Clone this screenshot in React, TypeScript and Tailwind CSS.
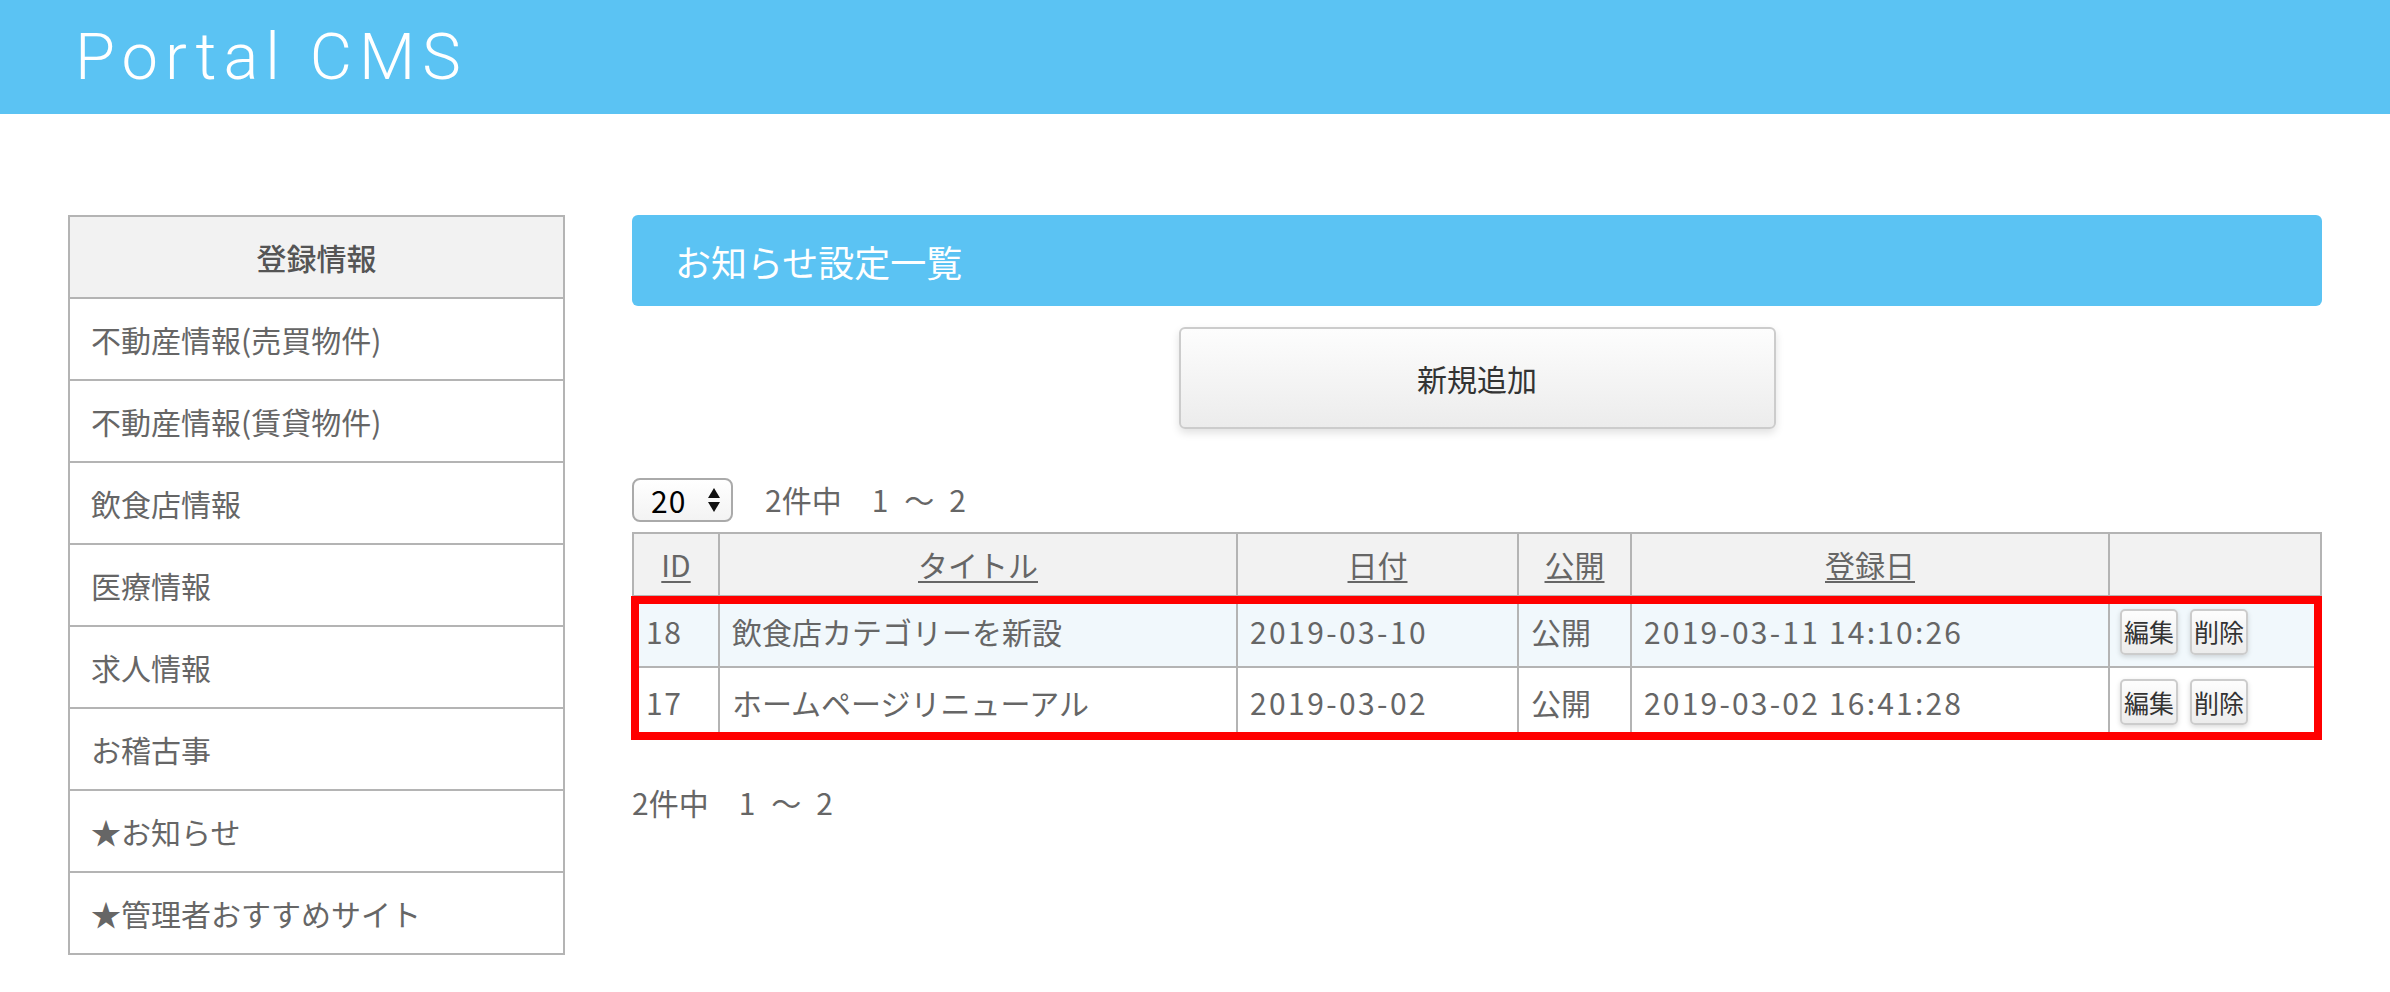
import React from "react";

const sideItems = [
  "不動産情報(売買物件)",
  "不動産情報(賃貸物件)",
  "飲食店情報",
  "医療情報",
  "求人情報",
  "お稽古事",
  "★お知らせ",
  "★管理者おすすめサイト",
];

const rows = [
  { id: "18", title: "飲食店カテゴリーを新設", date: "2019-03-10", pub: "公開", reg: "2019-03-11 14:10:26", bg: "bg-[#f1f8fc]" },
  { id: "17", title: "ホームページリニューアル", date: "2019-03-02", pub: "公開", reg: "2019-03-02 16:41:28", bg: "bg-white" },
];

function SmallBtn({ label }: { label: string }) {
  return (
    <button className="h-[46px] w-[58px] rounded-[5px] border-2 border-[#cccccc] bg-gradient-to-b from-[#fdfdfd] to-[#ececec] text-[25px] leading-none text-[#333333] shadow-[0_2px_5px_rgba(0,0,0,0.15)]">
      {label}
    </button>
  );
}

function Count() {
  return (
    <span className="text-[30px] text-[#666666]">
      2件中　<span className="tracking-[1px]">1</span>
      {"\u2002"}～{"\u2002"}2
    </span>
  );
}

export default function App() {
  const font = { fontFamily: '"Noto Sans CJK JP", "Noto Sans", sans-serif' };
  return (
    <div className="min-h-[992px] w-[2390px] bg-white" style={font}>
      <header className="flex h-[114px] items-center bg-[#5bc3f3] pl-[75px]">
        <h1
          className="text-[65px] font-light leading-none tracking-[7px] text-white"
          style={{ fontFamily: 'Roboto, "Liberation Sans", sans-serif' }}
        >
          Portal CMS
        </h1>
      </header>

      <div className="flex items-start gap-[67px] px-[68px] pt-[101px]">
        <nav className="w-[497px] shrink-0 border-2 border-[#b4b4b4]">
          <div className="flex h-[80px] items-center justify-center bg-[#f2f2f2] text-[30px] font-medium text-[#555555]">
            登録情報
          </div>
          {sideItems.map((s) => (
            <div key={s} className="flex h-[82px] items-center border-t-2 border-[#b4b4b4] pl-[21px] text-[30px] text-[#666666]">
              {s}
            </div>
          ))}
        </nav>

        <main className="flex-1">
          <div className="flex h-[91px] items-center rounded-[6px] bg-[#5bc3f3] pl-[43px] text-[36px] text-white">
            お知らせ設定一覧
          </div>

          <div className="mt-[21px] flex justify-center">
            <button className="h-[102px] w-[597px] rounded-[6px] border-2 border-[#cccccc] bg-gradient-to-b from-[#fdfdfd] to-[#ececec] text-[30px] text-[#333333] shadow-[0_4px_8px_rgba(0,0,0,0.12)]">
              新規追加
            </button>
          </div>

          <div className="mt-[48px] flex items-center gap-[32px]">
            <div className="flex h-[44px] w-[101px] items-center justify-between rounded-[8px] border-2 border-[#aaaaaa] bg-gradient-to-b from-white to-[#f3f3f3] pl-[17px] pr-[10px] text-[30px] leading-none tracking-[1px] text-black">
              <span>20</span>
              <svg width="14" height="28" viewBox="0 0 14 28">
                <polygon points="7,2 13,12 1,12" fill="#111" />
                <polygon points="1,16 13,16 7,26" fill="#111" />
              </svg>
            </div>
            <Count />
          </div>

          <div className="relative mt-[10px]">
            <table className="w-full table-fixed border-collapse text-[30px] text-[#666666]">
              <colgroup>
                <col className="w-[86px]" />
                <col className="w-[518px]" />
                <col className="w-[281px]" />
                <col className="w-[113px]" />
                <col className="w-[478px]" />
                <col />
              </colgroup>
              <thead>
                <tr className="h-[63px] bg-[#f2f2f2]">
                  {["ID", "タイトル", "日付", "公開", "登録日", ""].map((h, i) => (
                    <th key={i} className="border-2 border-[#b4b4b4] text-center font-normal">
                      {h && <span className="underline underline-offset-[4px] decoration-[2px]">{h}</span>}
                    </th>
                  ))}
                </tr>
              </thead>
              <tbody>
                {rows.map((r, i) => (
                  <tr key={r.id} className={`${i === 0 ? "h-[71px]" : "h-[70px]"} ${r.bg}`}>
                    <td className="border-2 border-[#b4b4b4] px-[12px] tracking-[1.5px]">{r.id}</td>
                    <td className="border-2 border-[#b4b4b4] px-[12px] whitespace-nowrap">{r.title}</td>
                    <td className="border-2 border-[#b4b4b4] px-[12px] tracking-[2.4px]">{r.date}</td>
                    <td className="border-2 border-[#b4b4b4] px-[12px]">{r.pub}</td>
                    <td className="border-2 border-[#b4b4b4] px-[12px] whitespace-nowrap tracking-[2.2px]">{r.reg}</td>
                    <td className="border-2 border-[#b4b4b4] px-[10px]">
                      <div className="flex gap-[12px]">
                        <SmallBtn label="編集" />
                        <SmallBtn label="削除" />
                      </div>
                    </td>
                  </tr>
                ))}
              </tbody>
            </table>
            <div className="pointer-events-none absolute left-[-1px] right-0 top-[64px] bottom-[-2px] border-[8px] border-[#ff0000]" />
          </div>

          <div className="mt-[42px]">
            <Count />
          </div>
        </main>
      </div>
    </div>
  );
}
